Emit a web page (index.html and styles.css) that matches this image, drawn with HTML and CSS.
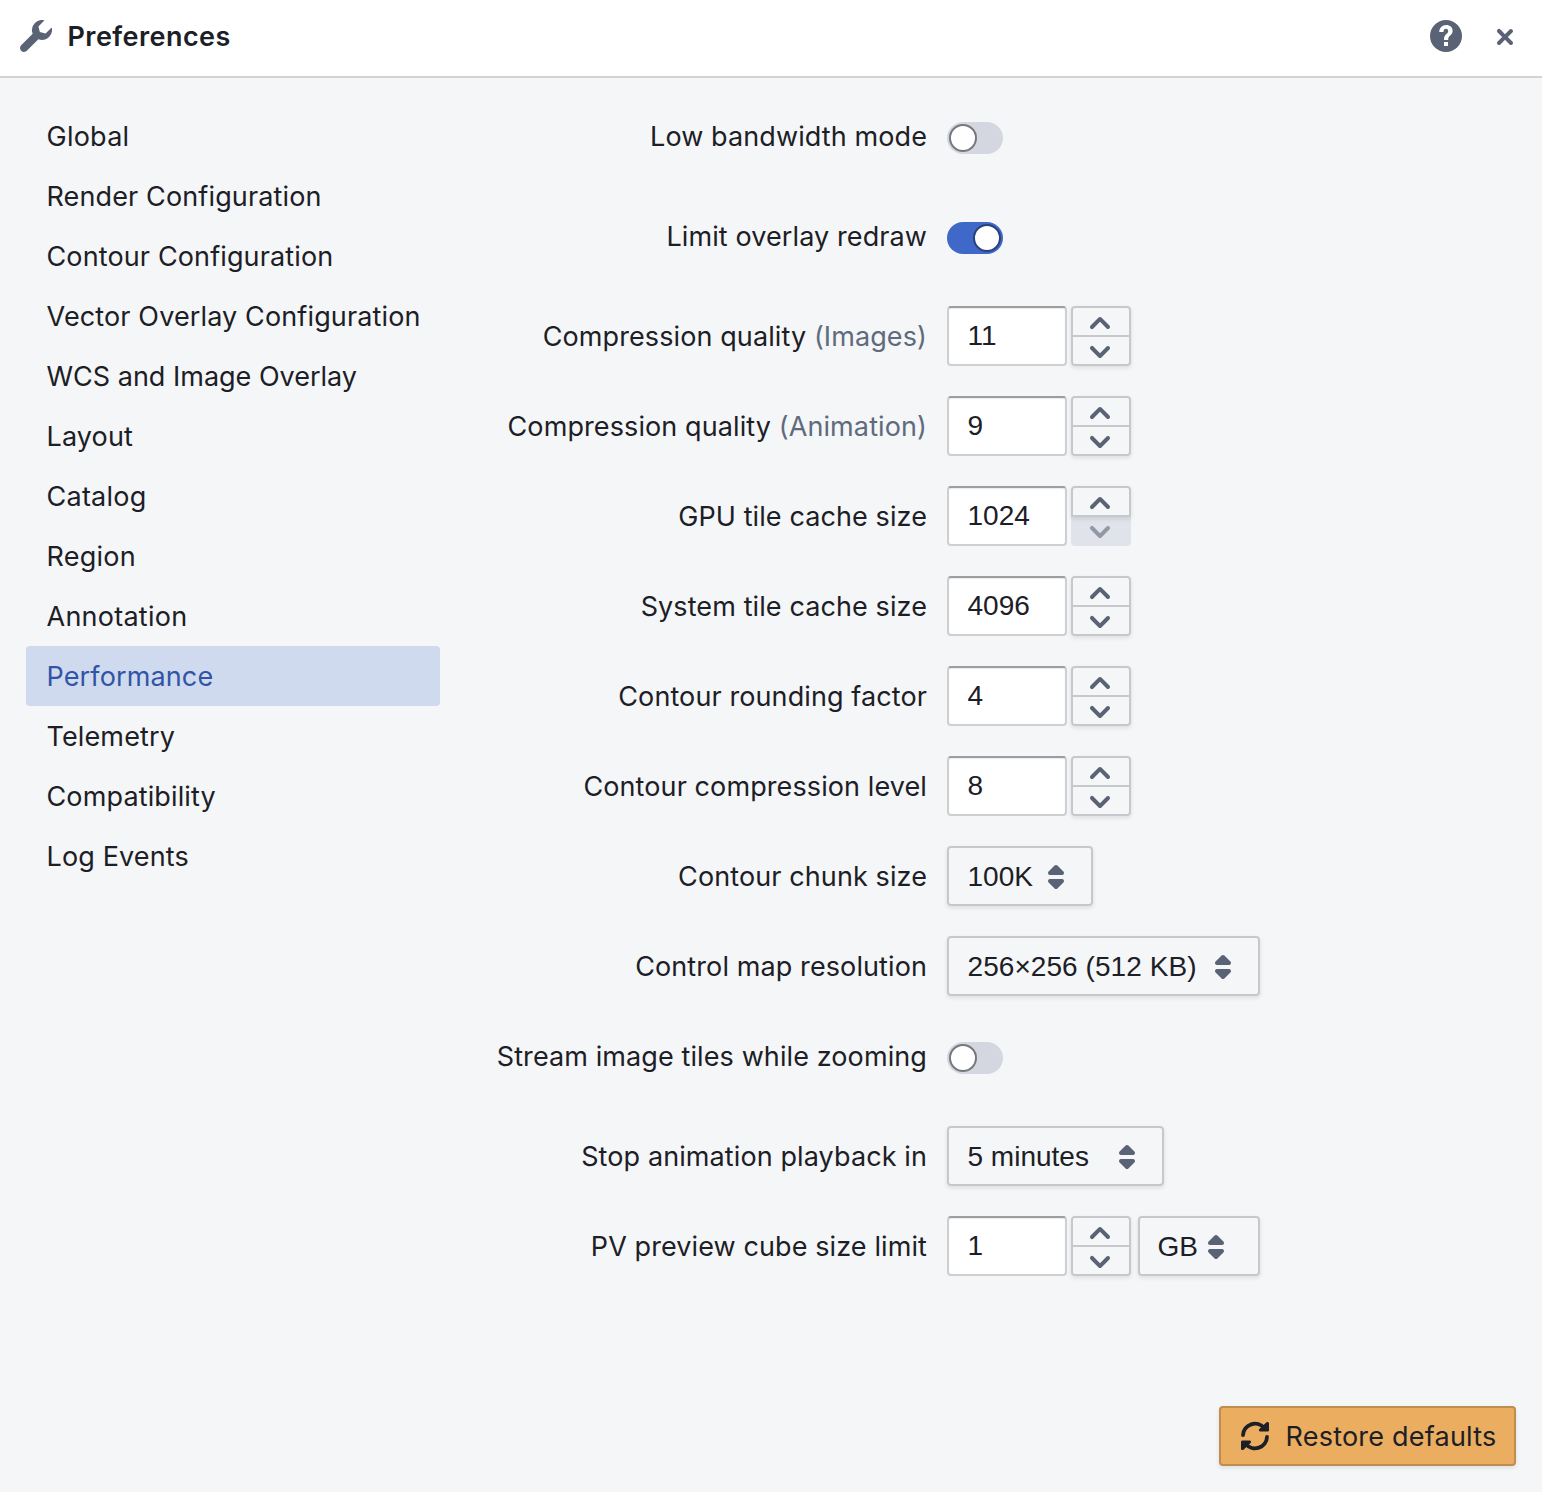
FILE: index.html
```html
<!DOCTYPE html>
<html lang="en">
<head>
<meta charset="utf-8">
<title>Preferences</title>
<link rel="stylesheet" href="styles.css">
</head>
<body>
<svg class="sprite" aria-hidden="true">
  <symbol id="wrench" viewBox="0 0 16 16"><path d="M15.83 3.7l-3.06 3.05-2.84-.7-.7-2.83L12.29.17a5.004 5.004 0 00-4.83 1.29 4.967 4.967 0 00-1.12 5.36L.58 12.58c-.36.36-.58.86-.58 1.41 0 1.1.9 2 2 2 .55 0 1.05-.22 1.41-.59l5.77-5.77c1.79.69 3.91.35 5.35-1.12a4.985 4.985 0 001.3-4.81z"/></symbol>
  <symbol id="help" viewBox="0 0 16 16"><path fill-rule="evenodd" d="M8 0a8 8 0 100 16A8 8 0 008 0zM7 11h2v2H7zM7 10c0-1.8.4-2.3 1.2-3 .6-.5.9-.8.9-1.4 0-.7-.4-1.2-1.1-1.2-.8 0-1.2.6-1.3 1.6H4.6C4.7 4 6 2.5 8.1 2.5c1.9 0 3.2 1.1 3.2 2.9 0 1.2-.6 1.9-1.3 2.5-.7.6-.9 1-.9 2.1z"/></symbol>
  <symbol id="cross" viewBox="0 0 16 16"><path d="M9.41 8l2.29-2.29c.19-.18.3-.43.3-.71a1.003 1.003 0 00-1.71-.71L8 6.59l-2.29-2.3a1.003 1.003 0 00-1.42 1.42L6.59 8 4.3 10.29c-.19.18-.3.43-.3.71a1.003 1.003 0 001.71.71L8 9.41l2.29 2.29c.18.19.43.3.71.3a1.003 1.003 0 00.71-1.71L9.41 8z"/></symbol>
  <symbol id="up" viewBox="0 0 16 16"><path d="M12.71 9.29l-4-4C8.53 5.11 8.28 5 8 5s-.53.11-.71.29l-4 4a1.003 1.003 0 001.42 1.42L8 7.41l3.29 3.29c.18.19.43.3.71.3a1.003 1.003 0 00.71-1.71z"/></symbol>
  <symbol id="down" viewBox="0 0 16 16"><path d="M12 5c-.28 0-.53.11-.71.29L8 8.59l-3.29-3.3a1.003 1.003 0 00-1.42 1.42l4 4c.18.18.43.29.71.29s.53-.11.71-.29l4-4A1.003 1.003 0 0012 5z"/></symbol>
  <symbol id="caret" viewBox="0 0 16 16"><path d="M5 7h6a1.003 1.003 0 00.71-1.71l-3-3C8.53 2.11 8.28 2 8 2s-.53.11-.71.29l-3 3A1.003 1.003 0 005 7zm6 2H5a1.003 1.003 0 00-.71 1.71l3 3c.18.18.43.29.71.29s.53-.11.71-.29l3-3A1.003 1.003 0 0011 9z"/></symbol>
  <symbol id="refresh" viewBox="0 0 16 16"><path d="M2 7.6A6 6 0 0 1 12.6 4M14 8.4A6 6 0 0 1 3.4 12" fill="none" stroke="currentColor" stroke-width="1.9" stroke-linecap="round"/><path d="M14.2 1c.5 0 .8.3.8.8V5c0 .5-.3.8-.8.8h-3.5c-.7 0-1-.8-.5-1.3l3.4-3.2c.2-.2.4-.3.6-.3zM1.8 15c-.5 0-.8-.3-.8-.8V11c0-.5.3-.8.8-.8h3.5c.7 0 1 .8.5 1.3l-3.4 3.2c-.2.2-.4.3-.6.3z"/></symbol>
</svg>

<header class="titlebar">
  <svg class="icon"><use href="#wrench"/></svg>
  <h1>Preferences</h1>
  <svg class="icon help"><use href="#help"/></svg>
  <svg class="icon close"><use href="#cross"/></svg>
</header>

<main class="body">
  <nav class="tabs">
    <a class="loose">Global</a>
    <a>Render Configuration</a>
    <a>Contour Configuration</a>
    <a>Vector Overlay Configuration</a>
    <a class="tight">WCS and Image Overlay</a>
    <a>Layout</a>
    <a class="loose">Catalog</a>
    <a class="loose">Region</a>
    <a class="loose">Annotation</a>
    <a class="active">Performance</a>
    <a>Telemetry</a>
    <a>Compatibility</a>
    <a>Log Events</a>
  </nav>

  <section class="panel">
    <div class="row switch-row"><label>Low bandwidth mode</label><span class="switch"></span></div>
    <div class="row switch-row"><label>Limit overlay redraw</label><span class="switch on"></span></div>
    <div class="row"><label>Compression quality <span class="info">(Images)</span></label>
      <div class="number"><input value="11"><div class="steps"><button><svg class="icon"><use href="#up"/></svg></button><button><svg class="icon"><use href="#down"/></svg></button></div></div></div>
    <div class="row"><label>Compression quality <span class="info">(Animation)</span></label>
      <div class="number"><input value="9"><div class="steps"><button><svg class="icon"><use href="#up"/></svg></button><button><svg class="icon"><use href="#down"/></svg></button></div></div></div>
    <div class="row"><label>GPU tile cache size</label>
      <div class="number"><input value="1024"><div class="steps at-min"><button><svg class="icon"><use href="#up"/></svg></button><button disabled><svg class="icon"><use href="#down"/></svg></button></div></div></div>
    <div class="row"><label>System tile cache size</label>
      <div class="number"><input value="4096"><div class="steps"><button><svg class="icon"><use href="#up"/></svg></button><button><svg class="icon"><use href="#down"/></svg></button></div></div></div>
    <div class="row"><label>Contour rounding factor</label>
      <div class="number"><input value="4"><div class="steps"><button><svg class="icon"><use href="#up"/></svg></button><button><svg class="icon"><use href="#down"/></svg></button></div></div></div>
    <div class="row"><label>Contour compression level</label>
      <div class="number"><input value="8"><div class="steps"><button><svg class="icon"><use href="#up"/></svg></button><button><svg class="icon"><use href="#down"/></svg></button></div></div></div>
    <div class="row"><label>Contour chunk size</label>
      <div class="select chunk">100K<svg class="icon"><use href="#caret"/></svg></div></div>
    <div class="row"><label>Control map resolution</label>
      <div class="select resolution">256×256 (512 KB)<svg class="icon"><use href="#caret"/></svg></div></div>
    <div class="row switch-row"><label>Stream image tiles while zooming</label><span class="switch"></span></div>
    <div class="row"><label>Stop animation playback in</label>
      <div class="select playback">5 minutes<svg class="icon"><use href="#caret"/></svg></div></div>
    <div class="row"><label>PV preview cube size limit</label>
      <div class="number"><input value="1"><div class="steps"><button><svg class="icon"><use href="#up"/></svg></button><button><svg class="icon"><use href="#down"/></svg></button></div></div>
      <div class="select unit">GB<svg class="icon"><use href="#caret"/></svg></div></div>
  </section>
</main>

<footer class="footer">
  <button class="restore"><svg class="icon"><use href="#refresh"/></svg><span>Restore defaults</span></button>
</footer>
</body>
</html>
```
FILE: styles.css
```css
*, *::before { box-sizing: border-box; }

body {
  margin: 0;
  height: 1492px;
  display: flex;
  flex-direction: column;
  background: #f5f6f8;
  color: #1c2026;
  font: 27px/60px Inter, "Noto Sans", sans-serif;
  letter-spacing: 0.13px;
}

.sprite { display: none; }

.icon {
  width: 32px;
  height: 32px;
  flex: none;
  display: block;
  fill: currentColor;
  color: #5a6375;
}

.titlebar {
  height: 78px;
  display: flex;
  align-items: center;
  padding: 0 21px 4px 20px;
  background: #fff;
  border-bottom: 2px solid #d1d3d6;
}

.titlebar h1 {
  flex: 1;
  margin: 0 0 0 15.5px;
  padding-top: 2px;
  font-size: 27px;
  font-weight: 600;
  letter-spacing: 0.44px;
}

.help { margin-right: 27px; }
.close { margin-top: 2px; }

.body {
  flex: 1;
  display: flex;
  padding: 28px 26px 0;
}

.tabs {
  width: 414px;
  display: flex;
  flex-direction: column;
}

.tabs a {
  height: 60px;
  padding: 1px 0 0 20.5px;
  border-radius: 4px;
  white-space: nowrap;
}

.tabs .loose { letter-spacing: 0.25px; }
.tabs .tight { letter-spacing: 0; }

.tabs .active {
  background: #d0daee;
  color: #3055a6;
}

.panel {
  display: flex;
  flex-direction: column;
}

.row {
  height: 60px;
  margin-bottom: 30px;
  display: flex;
}

.row label {
  width: 487px;
  margin-right: 20px;
  padding-top: 1px;
  letter-spacing: 0.1px;
  text-align: right;
  white-space: nowrap;
}

.info { color: #5f6b7c; }

.switch-row { margin-bottom: 40px; }

.switch {
  width: 56px;
  height: 32px;
  margin-top: 16px;
  padding: 2px;
  display: flex;
  border-radius: 16px;
  background: #d4d7df;
}

.switch::before {
  content: "";
  width: 28px;
  height: 28px;
  border-radius: 50%;
  border: 2px solid #75787e;
  background: #fff;
}

.switch.on {
  justify-content: flex-end;
  background: #3f68c8;
}

.switch.on::before { border-color: #27427c; }

.number {
  display: flex;
  gap: 4px;
}

.number input {
  width: 120px;
  height: 60px;
  margin: 0;
  padding: 0 18px 0 18.5px;
  border: 2px solid #cdcfd1;
  border-top-color: #9c9ea1;
  border-radius: 4px;
  background: #fff;
  color: #1c2026;
  font: 28px "Liberation Sans", Arial, sans-serif;
  box-shadow: inset 0 1px 1px rgba(17, 20, 24, 0.08);
}

.steps {
  width: 60px;
  display: flex;
  flex-direction: column;
  border-radius: 4px;
  box-shadow: 0 2px 4px rgba(17, 20, 24, 0.1);
}

.steps button {
  height: 31px;
  margin: 0;
  padding: 3px 2px 0 0;
  display: flex;
  align-items: center;
  justify-content: center;
  border: 2px solid #c6c8cb;
  border-radius: 4px 4px 0 0;
  background: #f5f6f8;
}

.steps button:first-child { z-index: 1; }

.steps button + button {
  margin-top: -2px;
  border-radius: 0 0 4px 4px;
}

.steps.at-min { box-shadow: none; }
.steps.at-min button:first-child { box-shadow: 0 2px 4px rgba(17, 20, 24, 0.1); }

.steps button:disabled {
  border-color: #e0e3e9;
  background: #e0e3e9;
}

.steps button:disabled .icon { color: #9299a6; }

.select {
  height: 60px;
  padding: 2px 19px 0 18.5px;
  display: flex;
  align-items: center;
  justify-content: space-between;
  border: 2px solid #c6c8cb;
  border-radius: 4px;
  box-shadow: 0 2px 4px rgba(17, 20, 24, 0.1);
  font: 28px/54px "Liberation Sans", Arial, sans-serif;
  letter-spacing: 0;
  white-space: nowrap;
}

.chunk { width: 146px; }
.resolution { width: 313px; letter-spacing: 0.06px; }
.playback { width: 217px; }
.unit { width: 122px; margin-left: 7px; padding: 2px 26px 0 17.5px; }

.footer {
  display: flex;
  justify-content: flex-end;
  padding: 0 26px 26px;
}

.restore {
  width: 297px;
  height: 60px;
  margin: 0;
  padding: 0 0 0 18px;
  display: flex;
  align-items: center;
  gap: 14.5px;
  border: 2px solid #bf8d4f;
  border-radius: 4px;
  background: #ebad60;
  color: #1c2026;
  font: inherit;
  line-height: 54px;
  letter-spacing: 0.22px;
  white-space: nowrap;
  box-shadow: 0 2px 4px rgba(17, 20, 24, 0.1);
}

.restore span { padding-top: 2px; }
.restore .icon { color: #1c2026; }
```
